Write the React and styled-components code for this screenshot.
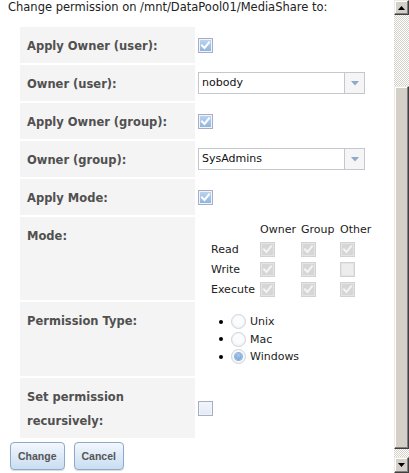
import React from "react";
import styled, { createGlobalStyle, css } from "styled-components";

const GlobalStyle = createGlobalStyle`
  html, body { margin: 0; padding: 0; background: #fff; }
  body {
    font-family: "DejaVu Sans", Verdana, sans-serif;
    font-size: 11px;
    color: #222;
  }
`;

const Page = styled.div`
  display: flex;
  width: 409px;
  height: 473px;
  overflow: hidden;
`;

const Content = styled.div`
  flex: 1;
  min-width: 0;
`;

const Title = styled.div`
  padding: 0 8px;
  line-height: 15px;
  font-size: 11.5px;
  margin-bottom: 12px;
  color: #222;
`;

const FormGrid = styled.div`
  display: grid;
  grid-template-columns: 175px 1fr;
  gap: 2px;
  margin-left: 20px;
`;

const LabelCell = styled.div`
  background: #f4f4f4;
  padding: 7px 7px 5px;
  line-height: 24px;
  font-weight: bold;
  font-size: 11.5px;
  color: #505050;
`;

const ValueCell = styled.div`
  display: flex;
  align-items: center;
  padding-left: 1px;
  min-height: ${(p) => p.$minH || 0}px;
`;

const Box = styled.span`
  box-sizing: border-box;
  display: inline-flex;
  align-items: center;
  justify-content: center;
  width: 15px;
  height: 15px;
  border: 1px solid #a9afc2;
  box-shadow: inset 0 0 0 1px #f0f4fa;
  background: linear-gradient(#f4f7fb, #e2eaf5);
  ${(p) =>
    p.$checked &&
    css`
      background: linear-gradient(#bcd6f0, #8cb4de);
    `}
  ${(p) =>
    p.$disabled &&
    css`
      border-color: #d2d2d2;
      box-shadow: inset 0 0 0 1px #e4e4e4;
      background: ${p.$checked ? "#d6d6d6" : "#ededed"};
    `}
`;

function Checkbox({ checked, disabled }) {
  return (
    <Box $checked={checked} $disabled={disabled}>
      {checked && (
        <svg width="11" height="11" viewBox="0 0 11 11">
          <path
            d="M2 5.5 L4.5 8 L9 2.5"
            fill="none"
            stroke={disabled ? "#f4f4f4" : "#ffffff"}
            strokeWidth="2"
            strokeLinecap="square"
          />
        </svg>
      )}
    </Box>
  );
}

const SelectBox = styled.div`
  box-sizing: border-box;
  display: flex;
  width: 167px;
  height: 22px;
  border: 1px solid #c4c8ce;
  background: #fff;
`;

const SelectText = styled.span`
  flex: 1;
  padding-left: 3px;
  line-height: 20px;
  color: #111;
`;

const SelectArrow = styled.span`
  width: 19px;
  border-left: 1px solid #c4c8ce;
  background: #f5f5f5;
  display: flex;
  align-items: center;
  justify-content: center;
`;

function Select({ value }) {
  return (
    <SelectBox>
      <SelectText>{value}</SelectText>
      <SelectArrow>
        <svg width="8" height="5" viewBox="0 0 8 5">
          <path d="M0 0 H8 L4 4.5 Z" fill="#8ea9cc" />
        </svg>
      </SelectArrow>
    </SelectBox>
  );
}

const ModeGrid = styled.div`
  display: grid;
  grid-template-columns: 49px 41px 39px 36px;
  grid-auto-rows: 20px;
  align-items: center;
  margin-left: 13px;
  padding: 2px 0 1px;
  color: #222;
`;

const PermList = styled.ul`
  list-style: none;
  margin: 0;
  padding: 0 0 0 21px;
`;

const PermItem = styled.li`
  display: flex;
  align-items: center;
  height: 17.5px;
  color: #222;
  &::before {
    content: "";
    width: 4px;
    height: 4px;
    border-radius: 50%;
    background: #000;
    margin-right: 8px;
  }
`;

const Radio = styled.span`
  box-sizing: border-box;
  width: 15px;
  height: 15px;
  border-radius: 50%;
  border: 1px solid #cfd3da;
  background: radial-gradient(circle at 50% 45%, #fbfcfd 0 45%, #e9ecf0 85%);
  box-shadow: inset 0 0 0 1px #f6f7f9;
  margin-right: 4px;
  display: inline-flex;
  align-items: center;
  justify-content: center;
  ${(p) =>
    p.$checked &&
    css`
      &::after {
        content: "";
        width: 7px;
        height: 7px;
        border-radius: 50%;
        background: radial-gradient(circle at 50% 35%, #a9c8ea, #6a9bd0);
        box-shadow: 0 0 0 1px #8fb2d8;
      }
    `}
`;

const ButtonRow = styled.div`
  display: flex;
  gap: 9px;
  padding: 4px 0 0 10px;
`;

const Button = styled.button`
  box-sizing: border-box;
  height: 28px;
  padding: 0 7px;
  border: 1px solid #8fa9c6;
  border-radius: 4px;
  background: linear-gradient(#f2f7fd, #c9ddf2);
  box-shadow: 0 1px 1px rgba(0, 0, 0, 0.15);
  font-family: "Liberation Sans", Arial, sans-serif;
  font-weight: bold;
  font-size: 10.5px;
  color: #555;
`;

const Scrollbar = styled.div`
  width: 15px;
  display: flex;
  flex-direction: column;
  flex-shrink: 0;
`;

const ScrollButton = styled.div`
  box-sizing: border-box;
  flex-shrink: 0;
  height: ${(p) => p.$h}px;
  background: #d4d0c8;
  border-style: solid;
  border-width: 1px;
  border-color: #eeeae2 #404040 #404040 #eeeae2;
  box-shadow: inset -1px -1px 0 #808080, inset 1px 1px 0 #ffffff;
  display: flex;
  align-items: center;
  justify-content: center;
`;

const Track = styled.div`
  height: ${(p) => p.$h}px;
  flex-shrink: 0;
  background: repeating-conic-gradient(#d4d0c8 0 25%, #ffffff 0 50%) 0 0 / 2px 2px;
`;

export default function App() {
  return (
    <>
      <GlobalStyle />
      <Page>
        <Content>
          <Title>Change permission on /mnt/DataPool01/MediaShare to:</Title>
          <FormGrid>
            <LabelCell>Apply Owner (user):</LabelCell>
            <ValueCell>
              <Checkbox checked />
            </ValueCell>

            <LabelCell>Owner (user):</LabelCell>
            <ValueCell>
              <Select value="nobody" />
            </ValueCell>

            <LabelCell>Apply Owner (group):</LabelCell>
            <ValueCell>
              <Checkbox checked />
            </ValueCell>

            <LabelCell>Owner (group):</LabelCell>
            <ValueCell>
              <Select value="SysAdmins" />
            </ValueCell>

            <LabelCell>Apply Mode:</LabelCell>
            <ValueCell>
              <Checkbox checked />
            </ValueCell>

            <LabelCell>Mode:</LabelCell>
            <ValueCell>
              <ModeGrid>
                <span />
                <span>Owner</span>
                <span>Group</span>
                <span>Other</span>

                <span>Read</span>
                <Checkbox checked disabled />
                <Checkbox checked disabled />
                <Checkbox checked disabled />

                <span>Write</span>
                <Checkbox checked disabled />
                <Checkbox checked disabled />
                <Checkbox disabled />

                <span>Execute</span>
                <Checkbox checked disabled />
                <Checkbox checked disabled />
                <Checkbox checked disabled />
              </ModeGrid>
            </ValueCell>

            <LabelCell>Permission Type:</LabelCell>
            <ValueCell $minH={74}>
              <PermList>
                <PermItem>
                  <Radio />
                  Unix
                </PermItem>
                <PermItem>
                  <Radio />
                  Mac
                </PermItem>
                <PermItem>
                  <Radio $checked />
                  Windows
                </PermItem>
              </PermList>
            </ValueCell>

            <LabelCell>
              Set permission
              <br />
              recursively:
            </LabelCell>
            <ValueCell>
              <Checkbox />
            </ValueCell>
          </FormGrid>
          <ButtonRow>
            <Button>Change</Button>
            <Button>Cancel</Button>
          </ButtonRow>
        </Content>
        <Scrollbar>
          <ScrollButton $h={15}>
            <svg width="7" height="4" viewBox="0 0 7 4">
              <path d="M3.5 0 L7 4 H0 Z" fill="#000" />
            </svg>
          </ScrollButton>
          <Track $h={71} />
          <ScrollButton $h={363} />
          <Track $h={8} />
          <ScrollButton $h={16}>
            <svg width="7" height="4" viewBox="0 0 7 4">
              <path d="M0 0 H7 L3.5 4 Z" fill="#000" />
            </svg>
          </ScrollButton>
        </Scrollbar>
      </Page>
    </>
  );
}
